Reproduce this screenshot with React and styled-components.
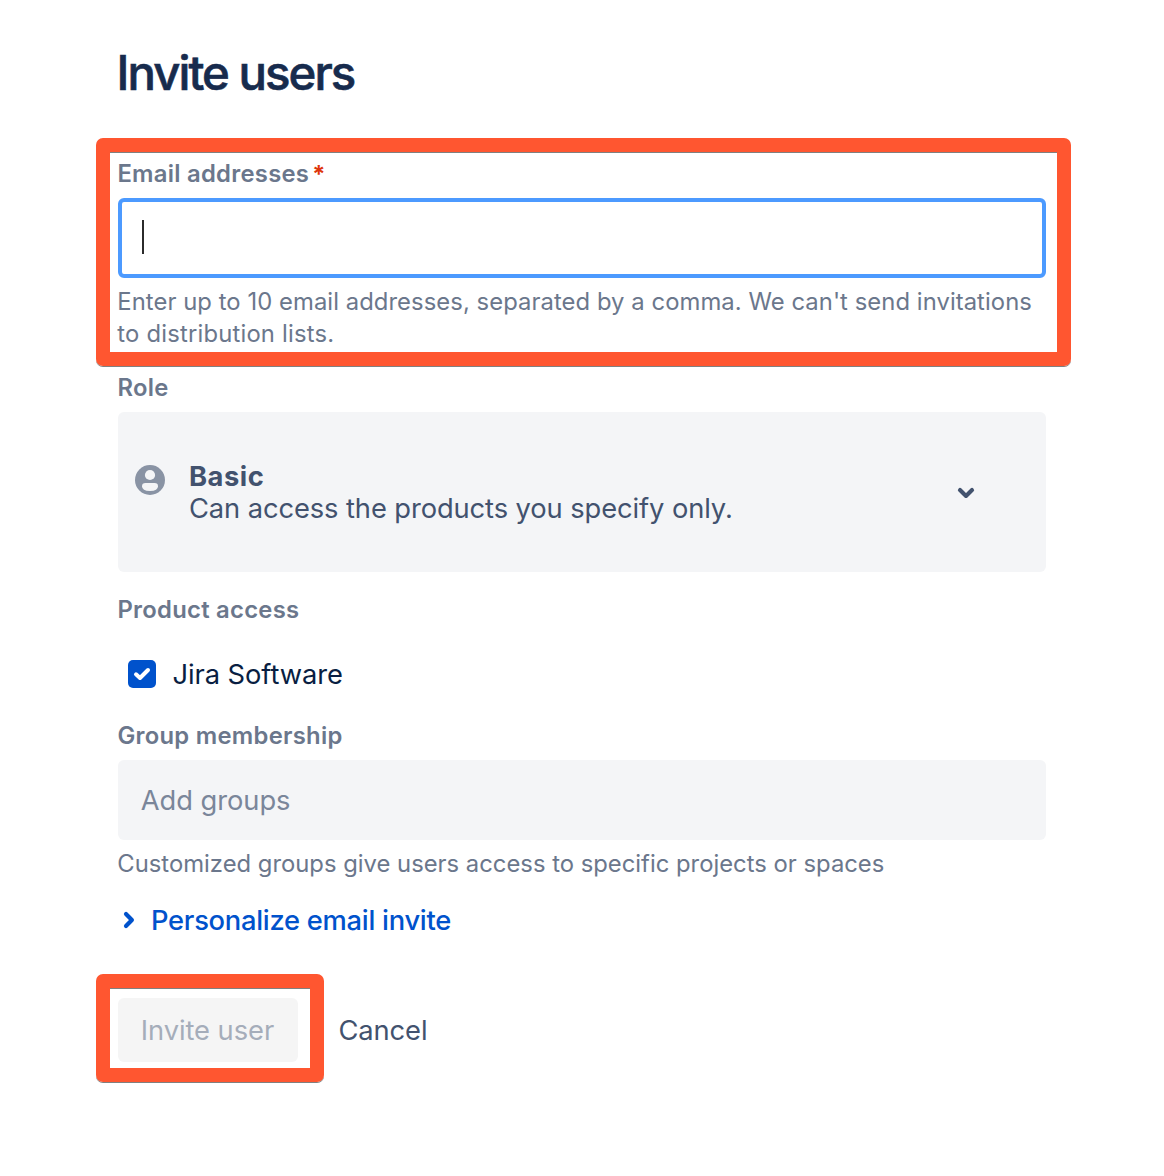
import React from "react";
import styled, { createGlobalStyle } from "styled-components";

const GlobalStyle = createGlobalStyle`
  * { box-sizing: border-box; }
  body {
    margin: 0;
    background: #fff;
    font-family: Inter, "Liberation Sans", sans-serif;
    font-kerning: normal;
  }
`;

const Page = styled.main`
  display: flex;
  flex-direction: column;
  align-items: flex-start;
  width: 1164px;
  height: 1176px;
  padding: 45px 93px 0 96px;
  background: #fff;
`;

const Title = styled.h1`
  margin: 0 0 37px;
  padding-left: 20.5px;
  font-size: 47.3px;
  font-weight: 500;
  line-height: 56px;
  letter-spacing: -1.95px;
  color: #172b4d;
  -webkit-text-stroke: 0.6px #172b4d;
`;

const Highlight = styled.section`
  width: ${(p) => p.$width}px;
  height: ${(p) => p.$height}px;
  padding: ${(p) => p.$padding};
  border: 14px solid #ff5630;
  border-radius: 7px;
  box-shadow: 0 1px 0 #808080, inset 0 1px 0 #808080;
`;

const Section = styled.section`
  width: 950px;
  padding-left: 22px;
`;

const Label = styled.div`
  display: flex;
  height: 32px;
  margin-top: ${(p) => p.$top || 0}px;
  margin-left: -0.6px;
  font-size: 23.8px;
  font-weight: 600;
  line-height: 32px;
  letter-spacing: 0.28px;
  white-space: nowrap;
  color: #6b778c;
`;

const Required = styled.span`
  margin-left: 3px;
  font-weight: 700;
  font-size: 23.5px;
  line-height: 31px;
  color: #de350b;
`;

const EmailInput = styled.div`
  display: flex;
  align-items: center;
  width: 928px;
  height: 80px;
  margin-top: 8px;
  padding: 0 20px 2px;
  border: 4px solid #4c9aff;
  border-radius: 6px;
`;

const Caret = styled.span`
  width: 2px;
  height: 34px;
  background: #2b2b2b;
`;

const Help = styled.p`
  margin: 8px 0 0 -0.7px;
  font-size: 23.8px;
  line-height: 32px;
  letter-spacing: 0.01px;
  white-space: nowrap;
  color: #6b778c;
`;

const HelpLine = styled.span`
  display: block;
  letter-spacing: ${(p) => p.$track}px;
`;

const RoleSelect = styled.div`
  display: flex;
  align-items: center;
  width: 928px;
  height: 160px;
  margin-top: 8px;
  padding: 0 70px 0 17px;
  border-radius: 6px;
  background: #f4f5f7;
  color: #42526e;
`;

const Avatar = styled.svg`
  width: 30px;
  height: 30px;
  margin: 0 24px 24px 0;
`;

const RoleText = styled.div`
  flex: 1;
  padding-top: 2px;
  font-size: 27.3px;
  line-height: 32px;
  letter-spacing: -0.09px;
  white-space: nowrap;
`;

const RoleName = styled.div`
  font-weight: 700;
  letter-spacing: 0.55px;
`;

const Chevron = styled.svg`
  width: 20px;
  height: 20px;
  fill: none;
  stroke: currentColor;
  stroke-width: 4.2;
  stroke-linecap: round;
  stroke-linejoin: round;
`;

const CheckboxRow = styled.div`
  display: flex;
  align-items: center;
  gap: 16.5px;
  height: 40px;
  margin: 28px 0 0 10px;
  font-size: 27.3px;
  letter-spacing: -0.07px;
  white-space: nowrap;
  color: #091e42;
`;

const CheckMark = styled.svg`
  width: 28px;
  height: 28px;
`;

const GroupInput = styled.div`
  display: flex;
  align-items: center;
  width: 928px;
  height: 80px;
  margin-top: 8px;
  padding-left: 22.7px;
  border-radius: 6px;
  background: #f4f5f7;
  font-size: 27.3px;
  letter-spacing: -0.04px;
  color: #7a869a;
`;

const Disclosure = styled.div`
  display: flex;
  align-items: center;
  gap: 13px;
  height: 40px;
  margin-top: 20px;
  font-size: 27.3px;
  letter-spacing: -0.26px;
  font-weight: 500;
  color: #0052cc;
`;

const Actions = styled.div`
  display: flex;
  align-items: center;
  gap: 14.4px;
  margin-top: 34px;
`;

const PrimaryButton = styled.div`
  display: flex;
  align-items: center;
  width: 180px;
  height: 64px;
  padding-left: 22.7px;
  border-radius: 6px;
  background: #f5f5f5;
  font-size: 27.3px;
  letter-spacing: -0.05px;
  white-space: nowrap;
  color: #a5adba;
`;

const CancelButton = styled.div`
  margin-top: 6px;
  font-size: 27.3px;
  line-height: 40px;
  letter-spacing: -0.07px;
  color: #42526e;
`;

export default function App() {
  return (
    <Page>
      <GlobalStyle />
      <Title>Invite users</Title>
      <Highlight $width={975} $height={228} $padding="6px 0 0 8px">
        <Label>
          <span>Email addresses</span>
          <Required>*</Required>
        </Label>
        <EmailInput>
          <Caret />
        </EmailInput>
        <Help>
          <HelpLine $track={0.07}>
            Enter up to 10 email addresses, separated by a comma. We can't send invitations
          </HelpLine>
          <HelpLine $track={0.2}>to distribution lists.</HelpLine>
        </Help>
      </Highlight>
      <Section>
        <Label $top={6}>Role</Label>
        <RoleSelect>
          <Avatar viewBox="0 0 30 30">
            <circle cx="15" cy="15" r="15" fill="#8993a4" />
            <circle cx="15" cy="10" r="5.1" fill="#f4f5f7" />
            <path d="M10.5 18h9Q23 18 23 21.2Q23 26 15 26Q7 26 7 21.2Q7 18 10.5 18Z" fill="#f4f5f7" />
          </Avatar>
          <RoleText>
            <RoleName>Basic</RoleName>
            <span>Can access the products you specify only.</span>
          </RoleText>
          <Chevron viewBox="0 0 20 20">
            <path d="M4 8.1L10 13.9L16 8.1" />
          </Chevron>
        </RoleSelect>
        <Label $top={22}>Product access</Label>
        <CheckboxRow>
          <CheckMark viewBox="0 0 28 28">
            <rect width="28" height="28" rx="5" fill="#0052cc" />
            <path d="M8 14.3L12 18L20 10" fill="none" stroke="#fff" strokeWidth="4" strokeLinecap="round" strokeLinejoin="round" />
          </CheckMark>
          <span>Jira Software</span>
        </CheckboxRow>
        <Label $top={26}>Group membership</Label>
        <GroupInput>Add groups</GroupInput>
        <Help>Customized groups give users access to specific projects or spaces</Help>
        <Disclosure>
          <Chevron viewBox="0 0 20 20">
            <path d="M8 4L13.9 10L8 16" />
          </Chevron>
          <span>Personalize email invite</span>
        </Disclosure>
      </Section>
      <Actions>
        <Highlight $width={228} $height={108} $padding="10px 0 0 8px">
          <PrimaryButton>Invite user</PrimaryButton>
        </Highlight>
        <CancelButton>Cancel</CancelButton>
      </Actions>
    </Page>
  );
}
